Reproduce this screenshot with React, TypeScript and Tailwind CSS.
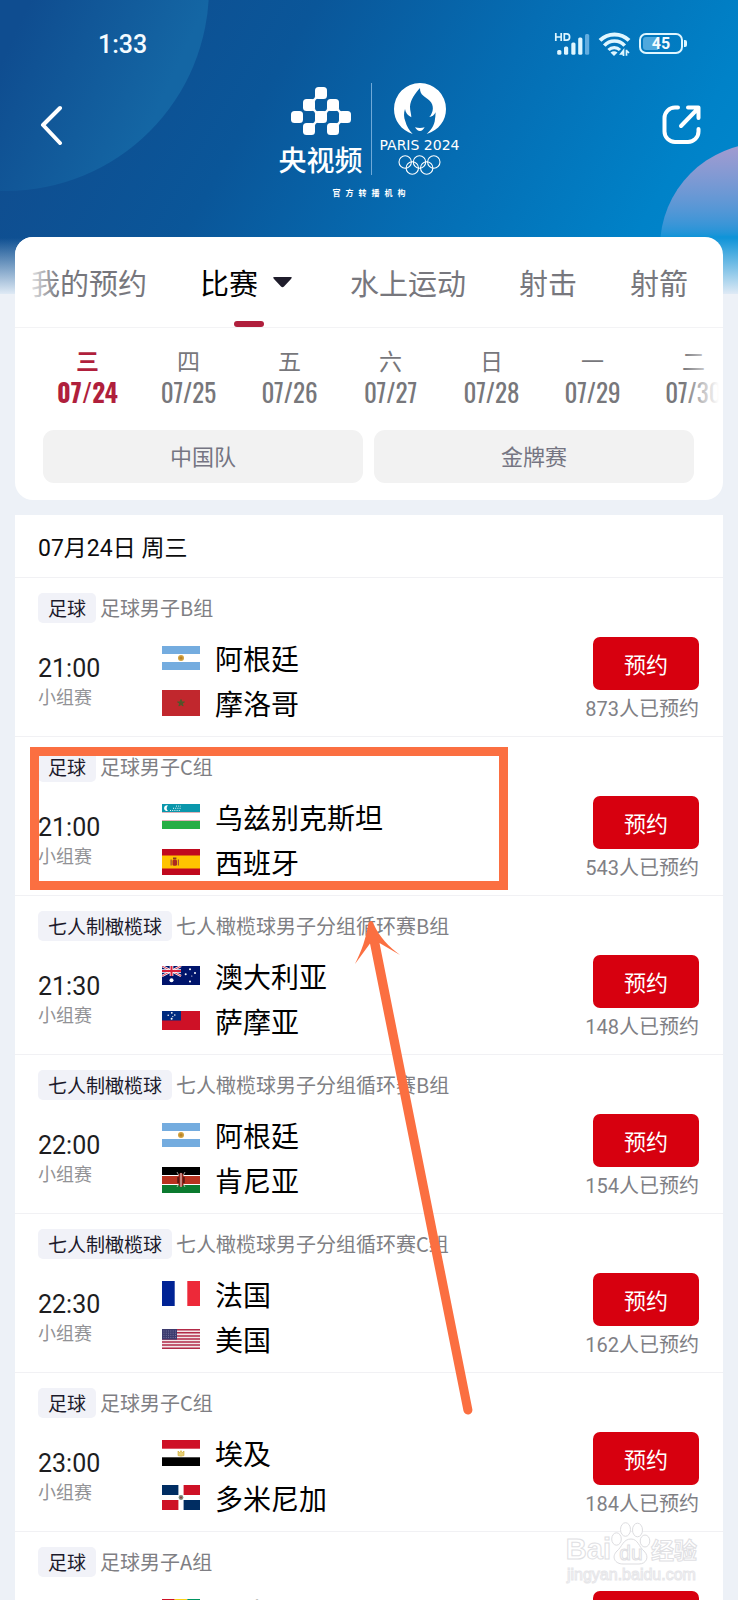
import React from "react";

type FlagCode = "ar" | "ma" | "uz" | "es" | "au" | "ws" | "ke" | "fr" | "us" | "eg" | "do" | "gn" | "nz";

interface Team {
  flag: FlagCode;
  name: string;
}

interface Match {
  sport: string;
  event: string;
  time: string;
  stage: string;
  teams: Team[];
  booked: number;
}

const matches: Match[] = [
  { sport: "足球", event: "足球男子B组", time: "21:00", stage: "小组赛", teams: [{ flag: "ar", name: "阿根廷" }, { flag: "ma", name: "摩洛哥" }], booked: 873 },
  { sport: "足球", event: "足球男子C组", time: "21:00", stage: "小组赛", teams: [{ flag: "uz", name: "乌兹别克斯坦" }, { flag: "es", name: "西班牙" }], booked: 543 },
  { sport: "七人制橄榄球", event: "七人橄榄球男子分组循环赛B组", time: "21:30", stage: "小组赛", teams: [{ flag: "au", name: "澳大利亚" }, { flag: "ws", name: "萨摩亚" }], booked: 148 },
  { sport: "七人制橄榄球", event: "七人橄榄球男子分组循环赛B组", time: "22:00", stage: "小组赛", teams: [{ flag: "ar", name: "阿根廷" }, { flag: "ke", name: "肯尼亚" }], booked: 154 },
  { sport: "七人制橄榄球", event: "七人橄榄球男子分组循环赛C组", time: "22:30", stage: "小组赛", teams: [{ flag: "fr", name: "法国" }, { flag: "us", name: "美国" }], booked: 162 },
  { sport: "足球", event: "足球男子C组", time: "23:00", stage: "小组赛", teams: [{ flag: "eg", name: "埃及" }, { flag: "do", name: "多米尼加" }], booked: 184 },
  { sport: "足球", event: "足球男子A组", time: "23:00", stage: "小组赛", teams: [{ flag: "gn", name: "几内亚" }, { flag: "nz", name: "新西兰" }], booked: 126 },
];

const days = [
  { week: "三", date: "07/24" },
  { week: "四", date: "07/25" },
  { week: "五", date: "07/26" },
  { week: "六", date: "07/27" },
  { week: "日", date: "07/28" },
  { week: "一", date: "07/29" },
  { week: "二", date: "07/30" },
];

const flagHeights: Record<FlagCode, number> = {
  ar: 24, ma: 26, uz: 25, es: 26, au: 19, ws: 19, ke: 26, fr: 25, us: 20, eg: 26, do: 25, gn: 26, nz: 19,
};

function UnionJack() {
  return (
    <g>
      <path d="M0 0L19 10M19 0L0 10" stroke="#fff" strokeWidth="2.4" />
      <path d="M0 0L19 10M19 0L0 10" stroke="#d8213b" strokeWidth="0.9" />
      <path d="M9.5 0V10M0 5H19" stroke="#fff" strokeWidth="3.6" />
      <path d="M9.5 0V10M0 5H19" stroke="#d8213b" strokeWidth="2" />
    </g>
  );
}

function FlagArt({ code }: { code: FlagCode }) {
  switch (code) {
    case "ar":
      return (
        <>
          <rect width="38" height="24" fill="#74acdf" />
          <rect y="8" width="38" height="8" fill="#fff" />
          <circle cx="19" cy="12" r="3" fill="#d2a23f" />
          <circle cx="19" cy="12" r="1.6" fill="#b9832a" />
        </>
      );
    case "ma":
      return (
        <>
          <rect width="38" height="26" fill="#c1272d" />
          <path d="M19 9.5L21.1 16L15.6 12H22.4L16.9 16Z" fill="#7a3a22" stroke="#4d5a2c" strokeWidth="1" />
        </>
      );
    case "uz":
      return (
        <>
          <rect width="38" height="25" fill="#fff" />
          <rect width="38" height="8" fill="#0a97ac" />
          <rect y="8" width="38" height="0.8" fill="#d9a0a8" />
          <rect y="16" width="38" height="0.8" fill="#d9a0a8" />
          <rect y="17" width="38" height="8" fill="#27ae45" />
          <path d="M6 1.5A2.9 2.9 0 1 0 6 6.9A3.4 3.4 0 0 1 6 1.5Z" fill="#fff" />
          <path d="M8 6.5H19M11 4.3H19M14 2.1H19" stroke="#fff" strokeWidth="0.9" strokeDasharray="1 1.2" />
        </>
      );
    case "es":
      return (
        <>
          <rect width="38" height="26" fill="#c0091e" />
          <rect y="6.5" width="38" height="13" fill="#ffc400" />
          <path d="M8.5 16.5V10.5H9.8V16.5ZM15.8 16.5V10.5H17V16.5Z" fill="#a8553a" />
          <rect x="10.5" y="10.5" width="4.5" height="6.3" rx="1.5" fill="#ad2b20" />
          <rect x="11" y="8.5" width="3.4" height="1.8" fill="#8a3a26" />
        </>
      );
    case "au":
      return (
        <>
          <rect width="38" height="19" fill="#00146b" />
          <UnionJack />
          <circle cx="9.5" cy="14.3" r="2" fill="#fff" />
          <circle cx="28" cy="3.2" r="1" fill="#fff" />
          <circle cx="23.7" cy="8.2" r="1" fill="#fff" />
          <circle cx="33" cy="6.9" r="1" fill="#fff" />
          <circle cx="28" cy="15.6" r="1" fill="#fff" />
          <circle cx="29.8" cy="10" r="0.6" fill="#fff" />
        </>
      );
    case "nz":
      return (
        <>
          <rect width="38" height="19" fill="#00146b" />
          <UnionJack />
        </>
      );
    case "ws":
      return (
        <>
          <rect width="38" height="19" fill="#ce1126" />
          <rect width="19" height="9.5" fill="#002b7f" />
          <circle cx="9.8" cy="1.8" r="0.9" fill="#fff" />
          <circle cx="6.2" cy="4.3" r="0.8" fill="#fff" />
          <circle cx="12.8" cy="4" r="0.8" fill="#fff" />
          <circle cx="9.6" cy="7.8" r="1" fill="#fff" />
          <circle cx="10.8" cy="5.6" r="0.6" fill="#fff" />
        </>
      );
    case "ke":
      return (
        <>
          <rect width="38" height="26" fill="#fff" />
          <rect width="38" height="8" fill="#000" />
          <rect y="9" width="38" height="8" fill="#b8321f" />
          <rect y="18" width="38" height="8" fill="#0b7a2f" />
          <path d="M15 5L23 20M23 5L15 20" stroke="#e8d9d0" strokeWidth="0.7" />
          <ellipse cx="19" cy="13" rx="3.2" ry="7.2" fill="#8e2117" />
          <path d="M19 6V20" stroke="#f0d8d2" strokeWidth="1.1" />
          <path d="M16 10V16M22 10V16" stroke="#2b0f0b" strokeWidth="1" />
        </>
      );
    case "fr":
      return (
        <>
          <rect width="38" height="25" fill="#fff" />
          <rect width="12.7" height="25" fill="#002395" />
          <rect x="25.3" width="12.7" height="25" fill="#ed2939" />
        </>
      );
    case "us":
      return (
        <>
          <rect width="38" height="20" fill="#f3e6e8" />
          <path d="M0 0.8H38M0 3.8H38M0 6.9H38M0 10H38M0 13.1H38M0 16.1H38M0 19.2H38" stroke="#b22a48" strokeWidth="1.5" />
          <rect width="15" height="10.6" fill="#3c3b6e" />
          <path d="M1.5 2H14M1.5 4.2H14M1.5 6.4H14M1.5 8.6H14" stroke="#9a9abb" strokeWidth="0.7" strokeDasharray="0.9 1.4" />
        </>
      );
    case "eg":
      return (
        <>
          <rect width="38" height="26" fill="#fff" />
          <rect width="38" height="8.7" fill="#ce1126" />
          <rect y="17.3" width="38" height="8.7" fill="#000" />
          <path d="M16 11V15.6L19 16.2L22 15.6V11L20.4 12.6L19 10.6L17.6 12.6Z" fill="#e6cf77" stroke="#cda92f" strokeWidth="0.6" />
        </>
      );
    case "do":
      return (
        <>
          <rect width="38" height="25" fill="#fff" />
          <rect width="16.4" height="10" fill="#002d62" />
          <rect x="21.6" width="16.4" height="10" fill="#ce1126" />
          <rect y="15" width="16.4" height="10" fill="#ce1126" />
          <rect x="21.6" y="15" width="16.4" height="10" fill="#002d62" />
          <circle cx="19" cy="12.5" r="2.4" fill="#7f8d7c" />
          <circle cx="19" cy="12.5" r="1" fill="#8f3038" />
        </>
      );
    case "gn":
      return (
        <>
          <rect width="12.7" height="26" fill="#ce1126" />
          <rect x="12.7" width="12.6" height="26" fill="#fcd116" />
          <rect x="25.3" width="12.7" height="26" fill="#009460" />
        </>
      );
  }
}

function Flag({ code }: { code: FlagCode }) {
  const height = flagHeights[code];
  return (
    <svg width="38" height={height} viewBox={`0 0 38 ${height}`} className="shrink-0" aria-hidden="true">
      <FlagArt code={code} />
    </svg>
  );
}

function StatusBar() {
  return (
    <div className="flex h-[83px] items-start justify-between pt-8 pr-[51px] pl-[98px] text-[#f4fbff]">
      <span className="font-[Roboto] text-[25px] leading-[26px] font-medium">1:33</span>
      <div className="flex items-start gap-2">
        <svg width="36" height="24" viewBox="0 0 36 24" aria-hidden="true">
          <path d="M1.8 1V9M7.2 1V9M1.8 5H7.2" fill="none" stroke="#dff6ff" strokeWidth="1.7" />
          <path d="M10.3 1.8H12.6A3 3.2 0 0 1 12.6 8.2H10.3Z" fill="none" stroke="#dff6ff" strokeWidth="1.7" />
          <g fill="#dff6ff">
            <rect x="3.2" y="18" width="4.2" height="4.7" rx="1.5" />
            <rect x="10" y="14.5" width="4.2" height="8.2" rx="1.5" />
            <rect x="17.3" y="10.5" width="4.2" height="12.2" rx="1.5" />
            <rect x="24.2" y="5.5" width="4.2" height="17.2" rx="1.5" />
          </g>
          <rect x="31" y="2" width="4.2" height="20.7" rx="1.5" fill="#62ade0" />
        </svg>
        <svg width="33" height="25" viewBox="0 0 33 25" fill="none" aria-hidden="true">
          <path d="M2 8.4A20.500 20.500 0 0 1 31 8.400" stroke="#dff6ff" strokeWidth="4" />
          <path d="M6.3 13.6A13.500 13.500 0 0 1 26.700 13.600" stroke="#dff6ff" strokeWidth="3.6" />
          <path d="M10.5 18A8 8 0 0 1 22 18" stroke="#dff6ff" strokeWidth="3.2" />
          <path d="M12.5 20.5Q16 17.800 19.500 20.500L16 24Z" fill="#dff6ff" />
          <path d="M25.5 24V18.500L22.800 22H25.500M28.500 17.800V23.800M28.500 18.500L31 21" stroke="#dff6ff" strokeWidth="1.7" />
        </svg>
        <div className="mt-px flex items-center gap-px">
          <div className="flex h-[21px] w-[44px] items-center justify-center rounded-[7px] border-2 border-[#dff6ff] p-[2px]">
            <div className="flex size-full items-center justify-center rounded-[3px] bg-linear-to-r from-[#4ea8dd] from-42% to-transparent to-42% font-[Roboto] text-[16px] leading-4 font-bold">
              45
            </div>
          </div>
          <div className="h-[7px] w-[3px] rounded-r-[2px] bg-[#dff6ff]" />
        </div>
      </div>
    </div>
  );
}

function YangshipinMark() {
  return (
    <svg width="60" height="48" viewBox="0 0 60 48" fill="#fff" aria-hidden="true">
      <rect x="24" y="0" width="12" height="12" rx="3.5" />
      <rect x="12" y="12" width="12" height="12" rx="3.5" />
      <rect x="36" y="12" width="12" height="12" rx="3.5" />
      <rect x="0" y="24" width="12" height="12" rx="3.5" />
      <rect x="24" y="24" width="12" height="12" rx="3.5" />
      <rect x="48" y="24" width="12" height="12" rx="3.5" />
      <rect x="12" y="36" width="12" height="12" rx="3.5" />
      <rect x="36" y="36" width="12" height="12" rx="3.5" />
      <path d="M21 12.3Q24 12 24 9L27 11.7Q24 12 24 15ZM21 23.7Q24 24 24 27L27 24.3Q24 24 24 21ZM33 24.3Q36 24 36 21L39 23.7Q36 24 36 27ZM45 23.7Q48 24 48 27L51 24.3Q48 24 48 21ZM21 36.3Q24 36 24 33L27 35.7Q24 36 24 39ZM45 36.3Q48 36 48 33L51 35.7Q48 36 48 39Z" />
    </svg>
  );
}

function ParisEmblem() {
  return (
    <svg width="52" height="52" viewBox="74 247 156 156" fill="#fff" aria-hidden="true">
      <path d="M130 400C95 388 74 360 74 325A78 78 0 0 1 230 325C230 360 209 388 172 400C182 390 196 376 197 354C199 346 198 340 199 335C194 345 188 348 180 349C193 334 195 314 181 300C168 288 151 284 152 262C140 276 123 296 122 318C122 330 126 340 126 350C116 345 108 336 107 325C103 336 103 350 108 362C112 378 120 390 130 400Z" />
      <path d="M137 380Q152 384 166 380Q160 391 152 391Q143 391 137 380Z" />
    </svg>
  );
}

function Rings() {
  return (
    <svg width="43" height="20" viewBox="0 0 43 20" fill="none" stroke="#fff" strokeWidth="1.1" aria-hidden="true">
      <circle cx="7.2" cy="7" r="6.2" />
      <circle cx="21.5" cy="7" r="6.2" />
      <circle cx="35.8" cy="7" r="6.2" />
      <circle cx="14.3" cy="13" r="6.2" />
      <circle cx="28.7" cy="13" r="6.2" />
    </svg>
  );
}

function NavBar() {
  return (
    <div className="flex items-start justify-between px-[37px] text-white">
      <button type="button" aria-label="返回" className="mt-5 flex h-[42px] w-[40px] items-center">
        <svg width="26" height="42" viewBox="0 0 26 42" fill="none" stroke="#fff" strokeWidth="4" strokeLinecap="round" strokeLinejoin="round" aria-hidden="true">
          <path d="M23 5L6 22L23 40" />
        </svg>
      </button>
      <div className="flex flex-col items-center">
        <div className="flex h-[92px] items-stretch gap-2">
          <div className="flex w-[84px] flex-col items-center justify-between pt-1">
            <YangshipinMark />
            <span className="text-[28px] leading-8 font-medium">央视频</span>
          </div>
          <div className="w-px bg-[#6fa9d8]" />
          <div className="flex w-[80px] flex-col items-center justify-between">
            <ParisEmblem />
            <span className="font-['DejaVu_Sans'] text-[14px] leading-4 whitespace-nowrap">PARIS 2024</span>
            <Rings />
          </div>
        </div>
        <div className="mt-3 flex gap-[5px] text-[8px] leading-3 font-bold">
          {["官", "方", "转", "播", "机", "构"].map((c) => (
            <span key={c}>{c}</span>
          ))}
        </div>
      </div>
      <button type="button" aria-label="分享" className="mt-5 flex h-[42px] w-[40px] items-center justify-end">
        <svg width="40" height="42" viewBox="0 0 40 42" fill="none" stroke="#fff" strokeWidth="4" strokeLinecap="round" strokeLinejoin="round" aria-hidden="true">
          <path d="M17 4.5H14A10.500 10.500 0 0 0 3.500 15V28.500A10.500 10.500 0 0 0 14 39H27A10.500 10.500 0 0 0 37.500 28.500V26" />
          <path d="M20 23L36.500 6M27 4.500H37.500V15" />
        </svg>
      </button>
    </div>
  );
}

const tabClass = "shrink-0 text-[29px] leading-10 text-[#77777d]";

function FilterCard() {
  return (
    <section className="overflow-hidden rounded-[18px] bg-white">
      <nav className="relative flex h-[91px] items-stretch gap-[53px] overflow-hidden border-b border-[#f3f3f5] pl-4">
        <button type="button" className={tabClass}>我的预约</button>
        <button type="button" className="relative flex shrink-0 items-center gap-[15px] pr-[5px] text-[29px] leading-10 text-black">
          比赛
          <svg width="19" height="11" viewBox="0 0 19 11" aria-hidden="true">
            <path d="M1.5 0H17.500Q20 0 18 2L11 9.500Q9.500 11 8 9.500L1 2Q-1 0 1.500 0Z" fill="#1f1d2b" />
          </svg>
          <span className="absolute bottom-0 left-1/2 h-[6px] w-[30px] -translate-x-1/2 rounded-full bg-[#b01f3c]" />
        </button>
        <button type="button" className={tabClass}>水上运动</button>
        <button type="button" className={tabClass}>射击</button>
        <button type="button" className={tabClass}>射箭</button>
        <div className="pointer-events-none absolute top-0 left-0 h-20 w-[44px] bg-linear-to-r from-white from-20% to-transparent" />
      </nav>
      <div className="relative flex overflow-hidden pt-[18px] pl-[22px]">
        {days.map((d, i) => (
          <button
            key={d.date}
            type="button"
            className={
              i === 0
                ? "flex w-[101px] shrink-0 flex-col items-center font-bold text-[#b01f3c]"
                : "flex w-[101px] shrink-0 flex-col items-center text-[#77777b]"
            }
          >
            <span className="text-[23px] leading-7">{d.week}</span>
            <span className="font-['Oswald','Roboto_Condensed','Noto_Sans_ExtraCondensed','Noto_Sans_Condensed','Open_Sans_Condensed','Roboto',sans-serif] text-[25px] leading-9">{d.date}</span>
          </button>
        ))}
        <div className="pointer-events-none absolute top-0 right-0 h-full w-[40px] bg-linear-to-l from-white from-10% to-transparent" />
      </div>
      <div className="flex gap-[11px] pt-5 pr-[29px] pb-[17px] pl-7">
        <button type="button" className="h-[53px] flex-1 rounded-[11px] bg-[#f2f2f2] pb-[3px] text-[22px] leading-8 text-[#757582]">中国队</button>
        <button type="button" className="h-[53px] flex-1 rounded-[11px] bg-[#f2f2f2] pb-[3px] text-[22px] leading-8 text-[#757582]">金牌赛</button>
      </div>
    </section>
  );
}

function MatchRow({ match }: { match: Match }) {
  return (
    <li className="border-b border-[#f1f1f4] pt-[15px] pr-6 pb-[11px] pl-[23px]">
      <div className="flex h-[30px] items-center gap-1">
        <span className="flex h-[30px] items-center rounded-[5px] bg-[#f1f2f8] px-[10px] text-[19px] leading-7 text-[#1c1a2b]">{match.sport}</span>
        <span className="text-[20px] leading-7 text-[#7f7f84]">{match.event}</span>
      </div>
      <div className="mt-3 flex">
        <div className="flex w-[124px] flex-col pt-5">
          <time className="font-[Roboto] text-[25px] leading-7 text-[#1d1d1f]">{match.time}</time>
          <span className="text-[18px] leading-[26px] text-[#929296]">{match.stage}</span>
        </div>
        <div className="flex flex-1 flex-col">
          {match.teams.map((t) => (
            <div key={t.name} className="flex h-[45px] items-center gap-[15px]">
              <Flag code={t.flag} />
              <span className="text-[28px] leading-10 text-black">{t.name}</span>
            </div>
          ))}
        </div>
        <div className="flex flex-col items-end gap-[3px] pt-[2px]">
          <button type="button" className="h-[53px] w-[106px] rounded-[7px] bg-[#d7000f] pb-[2px] text-[22px] leading-8 text-white">预约</button>
          <span className="font-[Roboto,'Noto_Sans_CJK_SC',sans-serif] text-[20px] leading-8 text-[#808085]">{match.booked}人已预约</span>
        </div>
      </div>
    </li>
  );
}

function Watermark() {
  return (
    <div className="pointer-events-none absolute top-[1521px] right-[41px] flex flex-col items-center text-white [-webkit-text-stroke:1px_#e0e0e3]">
      <div className="flex items-end font-['Liberation_Sans'] font-bold">
        <span className="text-[29px] leading-9">Bai</span>
        <div className="relative h-[46px] w-[40px]">
          <svg width="40" height="46" viewBox="0 0 40 46" fill="#fff" stroke="#dddde0" aria-hidden="true">
            <ellipse cx="5.5" cy="18" rx="4.8" ry="6.2" />
            <ellipse cx="14.5" cy="8.5" rx="5" ry="6.8" />
            <ellipse cx="26.5" cy="9" rx="5" ry="6.8" />
            <ellipse cx="34" cy="20" rx="4.8" ry="6" />
            <path d="M20 18C27 18 28 26 33 30C39 36 35 43 28 43H12C4 43 0 36 6 30C11 26 12 18 20 18Z" />
          </svg>
          <span className="absolute inset-x-0 bottom-1 text-center text-[21px] leading-5 font-normal">du</span>
        </div>
        <span className="font-['Noto_Sans_CJK_SC'] text-[23px] leading-9">经验</span>
      </div>
      <span className="font-['Liberation_Sans'] text-[16px] leading-4 [-webkit-text-stroke:1px_#e6e6e9]">jingyan.baidu.com</span>
    </div>
  );
}

export default function App() {
  return (
    <div className="relative h-screen overflow-hidden bg-[#edf1f7] font-['Noto_Sans_CJK_SC',sans-serif]">
      <div className="absolute inset-x-0 top-0 h-[294px] overflow-hidden bg-linear-[120deg,#124a8c_0%,#0a5699_35%,#056db3_60%,#0082c8_85%,#0089cf_100%]">
        <div className="absolute -top-[215px] -left-[197px] size-[406px] rounded-full bg-linear-[115deg,#0f4d90_55%,#1466a4_85%]" />
        <div className="absolute top-[143px] -right-[130px] size-[208px] rounded-full bg-linear-to-b from-[#a59bd0] to-[#1094d8] to-45%" />
        <div className="absolute inset-x-0 bottom-0 h-[56px] bg-linear-to-b from-transparent to-[#dfeaf5]" />
      </div>
      <div className="relative">
        <header className="h-[237px]">
          <StatusBar />
          <NavBar />
        </header>
        <main className="flex flex-col gap-[15px] px-[15px]">
          <FilterCard />
          <section className="bg-white">
            <h2 className="h-[63px] border-b border-[#f1f1f4] px-[23px] pt-4 font-[Roboto,'Noto_Sans_CJK_SC',sans-serif] text-[23px] leading-9 text-[#0c0c0d]">07月24日 周三</h2>
            <ul>
              {matches.map((m, i) => (
                <MatchRow key={i} match={m} />
              ))}
            </ul>
          </section>
        </main>
        <div className="pointer-events-none absolute top-[747px] left-[30px] h-[143px] w-[478px] border-[9px] border-[#fb6f41]" />
        <svg className="pointer-events-none absolute top-[915px] left-[350px]" width="130" height="505" viewBox="350 915 130 505" fill="#fb6f41" aria-hidden="true">
          <path d="M371 921Q373 921 374 925C379 936 389 947 400 955L379.5 943L472.3 1409A4.500 4.500 0 0 1 463.500 1411L370 943.500L355 964C362 950 366 938 368 925Q369 921 371 921Z" />
        </svg>
        <Watermark />
      </div>
    </div>
  );
}
